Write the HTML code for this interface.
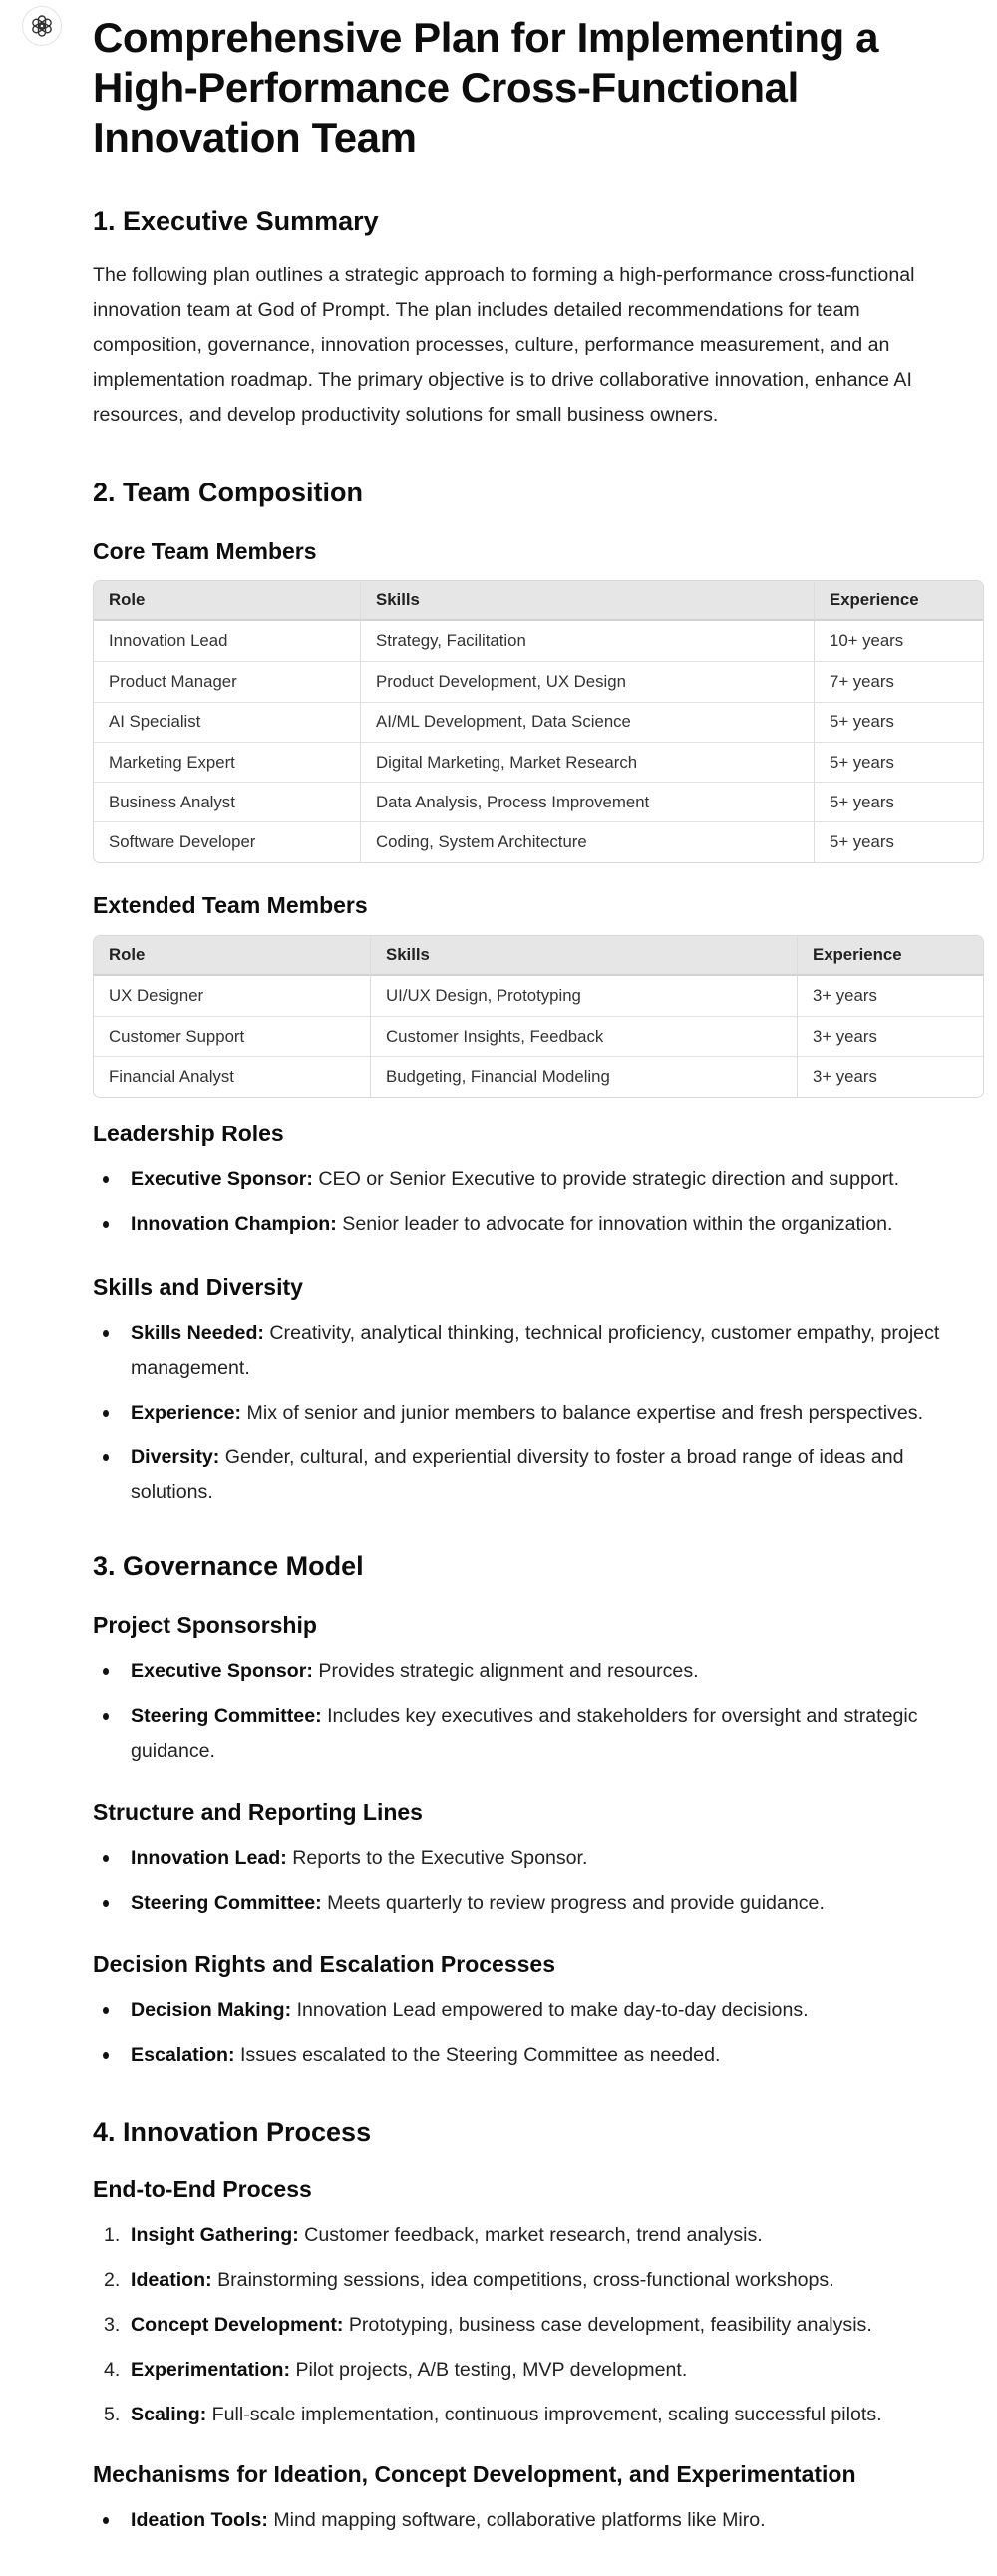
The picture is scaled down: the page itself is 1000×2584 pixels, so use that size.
<!DOCTYPE html>
<html><head><meta charset="utf-8"><style>
*{margin:0;padding:0;box-sizing:border-box}
body{width:1000px;height:2584px;background:#fff;font-family:"Liberation Sans",Arial,sans-serif;color:#0d0d0d;position:relative;overflow:hidden}
.icon{position:absolute;left:22px;top:6px;width:40px;height:40px;border:1px solid #e3e3e3;border-radius:50%;display:flex;align-items:center;justify-content:center}
.c{position:absolute;left:93px;top:0;width:895px}
h1{font-size:42px;line-height:50px;font-weight:bold;margin-top:13px;letter-spacing:-0.4px;width:870px}
h2{font-size:27px;line-height:36px;font-weight:bold}
h3{font-size:23px;line-height:30px;font-weight:bold}
p,li{font-size:19.6px;line-height:35px;color:#222}
p{width:880px}
li b{color:#0d0d0d}
ul,ol{padding-left:38px;list-style:none;counter-reset:n}
li{margin-bottom:10px;position:relative}
li:last-child{margin-bottom:0}
ul li::before{content:"";position:absolute;left:-28px;top:14px;width:6px;height:7px;border-radius:50%;background:#111}
ol li{counter-increment:n}
ol li::before{content:counter(n) ".";position:absolute;left:-27px;top:0;color:#222}
table{border-collapse:separate;border-spacing:0;table-layout:fixed;width:894px;border:1px solid #d9d9d9;border-radius:7px;overflow:hidden;font-size:16.8px;color:#333}
th{background:#e6e6e6;text-align:left;font-weight:bold;height:40px;padding:0 15px;border-bottom:2px solid #d2d2d2;color:#222}
td{height:40.3px;padding:0 15px;border-top:1px solid #e2e2e2}
tr:nth-child(2) td{border-top:none}
th+th,td+td{border-left:1px solid #dcdcdc}
</style></head><body>
<div class="icon"><svg width="24" height="24" viewBox="-12 -12 24 24" fill="none" stroke="#333" stroke-width="1.4">
<g><rect x="-3.5" y="-10" width="7" height="12" rx="3.5"/><rect x="-3.5" y="-10" width="7" height="12" rx="3.5" transform="rotate(60)"/><rect x="-3.5" y="-10" width="7" height="12" rx="3.5" transform="rotate(120)"/><rect x="-3.5" y="-10" width="7" height="12" rx="3.5" transform="rotate(180)"/><rect x="-3.5" y="-10" width="7" height="12" rx="3.5" transform="rotate(240)"/><rect x="-3.5" y="-10" width="7" height="12" rx="3.5" transform="rotate(300)"/></g></svg></div>
<div class="c">
<h1>Comprehensive Plan for Implementing a High-Performance Cross-Functional Innovation Team</h1>
<h2 style="margin-top:41px">1. Executive Summary</h2>
<p style="margin-top:19px">The following plan outlines a strategic approach to forming a high-performance cross-functional innovation team at God of Prompt. The plan includes detailed recommendations for team composition, governance, innovation processes, culture, performance measurement, and an implementation roadmap. The primary objective is to drive collaborative innovation, enhance AI resources, and develop productivity solutions for small business owners.</p>
<h2 style="margin-top:42px">2. Team Composition</h2>
<h3 style="margin-top:26px">Core Team Members</h3>
<table style="margin-top:14px"><colgroup><col style="width:267px"><col style="width:455px"><col></colgroup>
<tr><th>Role</th><th>Skills</th><th>Experience</th></tr>
<tr><td>Innovation Lead</td><td>Strategy, Facilitation</td><td>10+ years</td></tr>
<tr><td>Product Manager</td><td>Product Development, UX Design</td><td>7+ years</td></tr>
<tr><td>AI Specialist</td><td>AI/ML Development, Data Science</td><td>5+ years</td></tr>
<tr><td>Marketing Expert</td><td>Digital Marketing, Market Research</td><td>5+ years</td></tr>
<tr><td>Business Analyst</td><td>Data Analysis, Process Improvement</td><td>5+ years</td></tr>
<tr><td>Software Developer</td><td>Coding, System Architecture</td><td>5+ years</td></tr>
</table>
<h3 style="margin-top:27px">Extended Team Members</h3>
<table style="margin-top:15px"><colgroup><col style="width:277px"><col style="width:428px"><col></colgroup>
<tr><th>Role</th><th>Skills</th><th>Experience</th></tr>
<tr><td>UX Designer</td><td>UI/UX Design, Prototyping</td><td>3+ years</td></tr>
<tr><td>Customer Support</td><td>Customer Insights, Feedback</td><td>3+ years</td></tr>
<tr><td>Financial Analyst</td><td>Budgeting, Financial Modeling</td><td>3+ years</td></tr>
</table>
<h3 style="margin-top:21px">Leadership Roles</h3>
<ul style="margin-top:14px">
<li><b>Executive Sponsor:</b> CEO or Senior Executive to provide strategic direction and support.</li>
<li><b>Innovation Champion:</b> Senior leader to advocate for innovation within the organization.</li>
</ul>
<h3 style="margin-top:30px">Skills and Diversity</h3>
<ul style="margin-top:14px">
<li><b>Skills Needed:</b> Creativity, analytical thinking, technical proficiency, customer empathy, project<br>management.</li>
<li><b>Experience:</b> Mix of senior and junior members to balance expertise and fresh perspectives.</li>
<li><b>Diversity:</b> Gender, cultural, and experiential diversity to foster a broad range of ideas and<br>solutions.</li>
</ul>
<h2 style="margin-top:38px">3. Governance Model</h2>
<h3 style="margin-top:26px">Project Sponsorship</h3>
<ul style="margin-top:14px">
<li><b>Executive Sponsor:</b> Provides strategic alignment and resources.</li>
<li><b>Steering Committee:</b> Includes key executives and stakeholders for oversight and strategic<br>guidance.</li>
</ul>
<h3 style="margin-top:29px">Structure and Reporting Lines</h3>
<ul style="margin-top:14px">
<li><b>Innovation Lead:</b> Reports to the Executive Sponsor.</li>
<li><b>Steering Committee:</b> Meets quarterly to review progress and provide guidance.</li>
</ul>
<h3 style="margin-top:28px">Decision Rights and Escalation Processes</h3>
<ul style="margin-top:14px">
<li><b>Decision Making:</b> Innovation Lead empowered to make day-to-day decisions.</li>
<li><b>Escalation:</b> Issues escalated to the Steering Committee as needed.</li>
</ul>
<h2 style="margin-top:42px">4. Innovation Process</h2>
<h3 style="margin-top:24px">End-to-End Process</h3>
<ol style="margin-top:14px">
<li><b>Insight Gathering:</b> Customer feedback, market research, trend analysis.</li>
<li><b>Ideation:</b> Brainstorming sessions, idea competitions, cross-functional workshops.</li>
<li><b>Concept Development:</b> Prototyping, business case development, feasibility analysis.</li>
<li><b>Experimentation:</b> Pilot projects, A/B testing, MVP development.</li>
<li><b>Scaling:</b> Full-scale implementation, continuous improvement, scaling successful pilots.</li>
</ol>
<h3 style="margin-top:27px">Mechanisms for Ideation, Concept Development, and Experimentation</h3>
<ul style="margin-top:14px">
<li><b>Ideation Tools:</b> Mind mapping software, collaborative platforms like Miro.</li>
</ul>
</div>
</body></html>
